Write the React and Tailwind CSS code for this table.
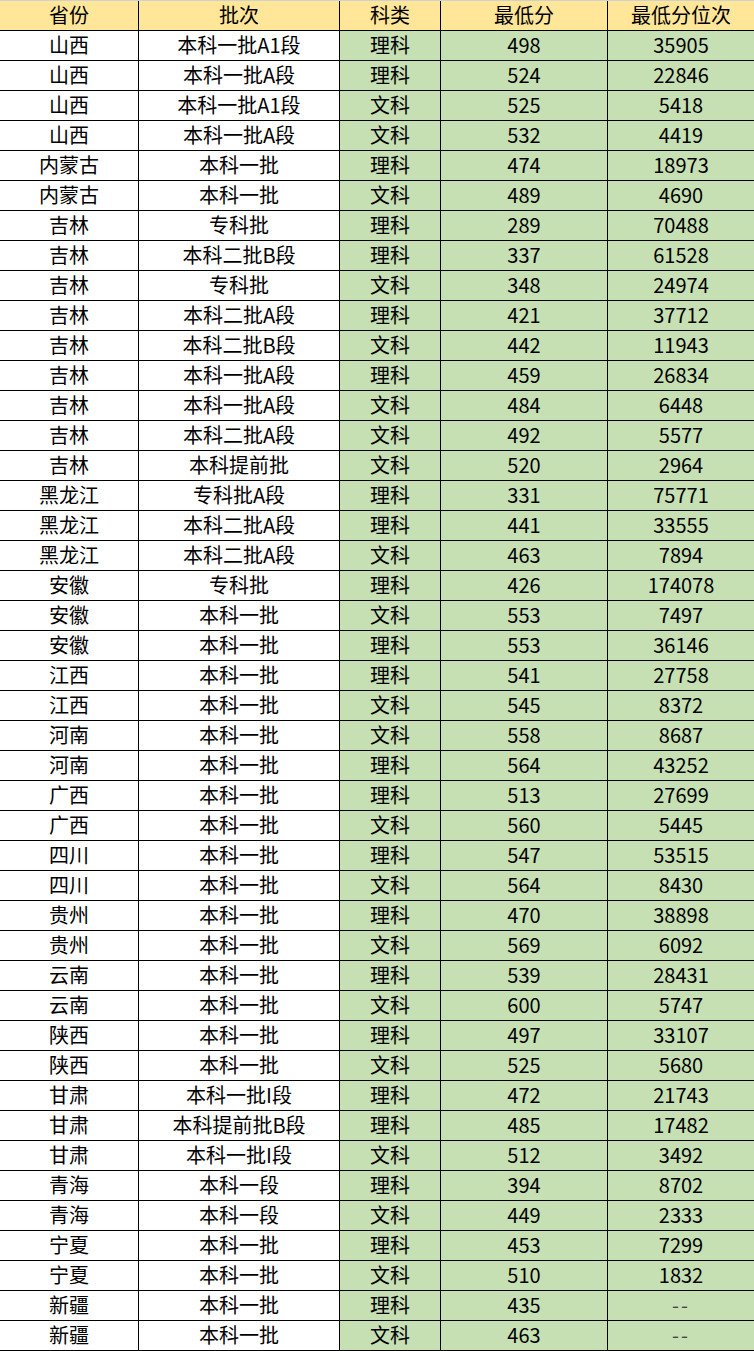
const rows = [
["山西","本科一批A1段","理科","498","35905"],
["山西","本科一批A段","理科","524","22846"],
["山西","本科一批A1段","文科","525","5418"],
["山西","本科一批A段","文科","532","4419"],
["内蒙古","本科一批","理科","474","18973"],
["内蒙古","本科一批","文科","489","4690"],
["吉林","专科批","理科","289","70488"],
["吉林","本科二批B段","理科","337","61528"],
["吉林","专科批","文科","348","24974"],
["吉林","本科二批A段","理科","421","37712"],
["吉林","本科二批B段","文科","442","11943"],
["吉林","本科一批A段","理科","459","26834"],
["吉林","本科一批A段","文科","484","6448"],
["吉林","本科二批A段","文科","492","5577"],
["吉林","本科提前批","文科","520","2964"],
["黑龙江","专科批A段","理科","331","75771"],
["黑龙江","本科二批A段","理科","441","33555"],
["黑龙江","本科二批A段","文科","463","7894"],
["安徽","专科批","理科","426","174078"],
["安徽","本科一批","文科","553","7497"],
["安徽","本科一批","理科","553","36146"],
["江西","本科一批","理科","541","27758"],
["江西","本科一批","文科","545","8372"],
["河南","本科一批","文科","558","8687"],
["河南","本科一批","理科","564","43252"],
["广西","本科一批","理科","513","27699"],
["广西","本科一批","文科","560","5445"],
["四川","本科一批","理科","547","53515"],
["四川","本科一批","文科","564","8430"],
["贵州","本科一批","理科","470","38898"],
["贵州","本科一批","文科","569","6092"],
["云南","本科一批","理科","539","28431"],
["云南","本科一批","文科","600","5747"],
["陕西","本科一批","理科","497","33107"],
["陕西","本科一批","文科","525","5680"],
["甘肃","本科一批I段","理科","472","21743"],
["甘肃","本科提前批B段","理科","485","17482"],
["甘肃","本科一批I段","文科","512","3492"],
["青海","本科一段","理科","394","8702"],
["青海","本科一段","文科","449","2333"],
["宁夏","本科一批","理科","453","7299"],
["宁夏","本科一批","文科","510","1832"],
["新疆","本科一批","理科","435","--"],
["新疆","本科一批","文科","463","--"],
];

function Row({ cells, header }) {
  const base = "flex items-center justify-center h-full pb-[1px]";
  const bg1 = header ? "bg-[#FFE699]" : "bg-white";
  const bg2 = header ? "bg-[#FFE699]" : "bg-[#C6E0B4]";
  return (
    <div className="flex h-[30px] border-b border-black">
      <div className={`${base} ${bg1} w-[139px] border-r border-black`}>{cells[0]}</div>
      <div className={`${base} ${bg1} w-[201px] border-r border-black`}>{cells[1]}</div>
      <div className={`${base} ${bg2} w-[101px] border-r border-black`}>{cells[2]}</div>
      <div className={`${base} ${bg2} w-[167px] border-r border-black`}>{cells[3]}</div>
      <div className={`${base} ${bg2} flex-1`}>{cells[4] === "--" ? <span className="text-[#444] tracking-[2px]">--</span> : cells[4]}</div>
    </div>
  );
}

export default function App() {
  return (
    <div className="w-[754px] bg-white text-black text-[20px] leading-none" style={{ fontFamily: '"Noto Sans CJK SC", "Noto Sans", sans-serif' }}>
      <div className="border-t border-[#d0d0d0]">
        <Row header cells={["省份","批次","科类","最低分","最低分位次"]} />
        {rows.map((r, i) => <Row key={i} cells={r} />)}
      </div>
    </div>
  );
}
